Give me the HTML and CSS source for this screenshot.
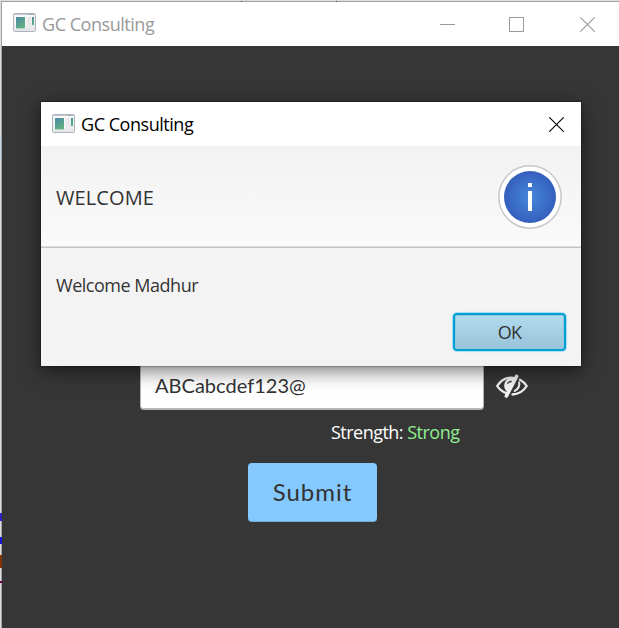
FILE: index.html
```html
<!DOCTYPE html>
<html lang="en">
<head>
<meta charset="utf-8">
<title>GC Consulting</title>
<link rel="stylesheet" href="styles.css">
</head>
<body>
<svg class="defs" width="0" height="0" aria-hidden="true">
  <defs>
    <linearGradient id="pane" x1="0" y1="0" x2=".6" y2="1"><stop offset="0" stop-color="#4b86a8"/><stop offset="1" stop-color="#61b183"/></linearGradient>
    <linearGradient id="frame" x1="0" y1="0" x2="0" y2="1"><stop offset="0" stop-color="#fafafa"/><stop offset="1" stop-color="#e2e4e8"/></linearGradient>
    <radialGradient id="disc"><stop offset="0" stop-color="#4688d9"/><stop offset="1" stop-color="#355fbd"/></radialGradient>
    <symbol id="app-icon" viewBox="0 0 23 19">
      <rect x=".5" y=".5" width="22" height="18" rx="1" fill="url(#frame)" stroke="#b0b5bd"/>
      <path d="M1 1.500h21" stroke="#c3c8d1"/>
      <path d="M15 1.500h6" stroke="#a3afbf"/>
      <rect x="2.500" y="3.500" width="10" height="12.500" fill="#fff"/>
      <rect x="3" y="4" width="9" height="11.500" fill="url(#pane)"/>
      <path d="M14 4h4v7h-4zM14 12.500h4v3h-4zM19 12.500h2v3h-2z" fill="#e9e9e9"/>
      <rect x="19" y="4" width="2" height="8" fill="url(#pane)"/>
    </symbol>
    <symbol id="close" viewBox="0 0 15 15"><path d="M.3.3l14.400 14.400M14.700.3L.3 14.700" fill="none" stroke="currentColor" stroke-width="1.100"/></symbol>
  </defs>
</svg>
<div class="desktop">
  <main class="window">
    <header class="titlebar">
      <svg class="app-icon"><use href="#app-icon"/></svg>
      <span class="title">GC Consulting</span>
      <div class="controls">
        <span class="minimize"></span>
        <span class="maximize"></span>
        <svg class="close"><use href="#close"/></svg>
      </div>
    </header>
    <section class="form">
      <div class="password-row">
        <div class="field">ABCabcdef123@</div>
        <svg class="eye" viewBox="0 0 32 24" fill="none" stroke="#f2f2f2" stroke-linecap="round">
          <path d="M10.500 19.200C6 17.700 3 14.800 1.200 12 4.500 6.800 9.800 3.600 15.500 3.600c1.200 0 2.200.1 3.300.4" stroke-width="2.300"/>
          <path d="M24 5.800c2.800 1.500 5 3.500 6.700 6.200-3.200 5-7.800 8.300-14.200 8.500" stroke-width="2.300"/>
          <path d="M12.500 18.500C7 16 7 9 11 5.500L19.500 3z" fill="#f2f2f2" stroke="none"/>
          <path d="M11.800 9.200c.8-1.200 1.800-1.800 3.500-1.700" stroke="#363636" stroke-width="1.300"/>
          <path d="M23.200 8.200c.7 4-1 6.800-4.500 8.800" stroke-width="2"/>
          <path d="M20.600 2.300L10.400 22" stroke-width="3.600"/>
        </svg>
      </div>
      <div class="strength">Strength: <span class="strong">Strong</span></div>
      <button class="submit"><span>Submit</span></button>
    </section>
  </main>
  <i class="edge selection"></i><i class="edge glyph-a"></i><i class="edge glyph-b"></i><i class="edge glyph-c"></i><i class="edge glyph-d"></i>
  <i class="tick tick-left"></i><i class="tick tick-right"></i>
</div>
<section class="dialog">
  <header class="dialog-title">
    <svg class="app-icon"><use href="#app-icon"/></svg>
    <span class="title">GC Consulting</span>
    <svg class="close"><use href="#close"/></svg>
  </header>
  <div class="dialog-header">
    <span class="heading">WELCOME</span>
    <svg class="info" viewBox="0 0 64 64">
      <circle cx="32" cy="32" r="31.200" fill="#fff" stroke="#c8c8c8" stroke-width="1.500"/>
      <circle cx="32" cy="32" r="26" fill="url(#disc)"/>
      <path d="M30 18h4v4h-4zM30 26h4v20h-4z" fill="#fff"/>
    </svg>
  </div>
  <div class="dialog-content">
    <p class="message">Welcome Madhur</p>
    <button class="ok">OK</button>
  </div>
</section>
</body>
</html>
```
FILE: styles.css
```css
* { box-sizing: border-box; }
body { margin: 0; width: 619px; height: 628px; overflow: hidden; position: relative; font-family: "Open Sans", "Noto Sans", sans-serif; font-size: 18px; color: #333; }
button { font: inherit; color: inherit; padding: 0; }
.defs { position: absolute; }
.desktop { height: 628px; background: #dcdcdc; padding: 1px 0 0 1px; position: relative; }
.window { height: 627px; border: solid #a2a2a2; border-width: 1px 0 0 1px; background: #363636; }
.titlebar { height: 44px; background: #fff; color: #999; display: flex; align-items: center; padding: 0 24px 0 11px; }
.app-icon { width: 23px; height: 19px; flex: none; }
.titlebar .app-icon { margin-top: -3px; }
.title { margin-left: 6px; line-height: 24px; letter-spacing: -.46px; }
.controls { display: flex; align-items: center; margin-left: auto; gap: 54px; }
.minimize { width: 15px; height: 1px; background: #999; }
.maximize { width: 15px; height: 15px; border: 1px solid #999; }
.close { width: 15px; height: 15px; flex: none; }
.controls .close { margin-left: 2px; }
.form { display: flex; flex-direction: column; align-items: flex-start; padding: 316px 0 0 138px; }
.password-row { display: flex; align-items: center; gap: 12px; height: 48px; }
.field { width: 344px; height: 48px; background: #fff; border: 1px solid #b5b5b5; border-bottom-width: 2px; border-radius: 4px; padding-left: 14px; font-family: Lato, sans-serif; font-size: 20px; line-height: 45px; letter-spacing: .02px; }
.eye { width: 32px; height: 24px; }
.strength { margin: 10px 0 0 191px; height: 24px; line-height: 24px; color: #fff; letter-spacing: -.52px; white-space: nowrap; }
.strong { color: #90ee90; }
.submit { margin: 19px 0 0 108px; width: 129px; height: 59px; border: 0; border-radius: 4px; background: #84c9ff; border-bottom: 1px solid #70abd9; font-family: Lato, sans-serif; font-size: 24px; letter-spacing: 1px; line-height: 56px; }
.submit span { display: block; }
.edge { position: absolute; left: 0; width: 2px; }
.selection { top: 136px; height: 23px; width: 1px; background: #c9dbe8; }
.glyph-a { top: 513px; height: 8px; background: #3020c8; }
.glyph-b { top: 537px; height: 7px; background: #1515d8; }
.glyph-c { top: 555px; height: 13px; background: #843400; }
.glyph-d { top: 581px; height: 2px; background: #750045; }
.tick { position: absolute; top: 1px; width: 1px; height: 1px; background: #444; }
.tick-left { left: 241px; }
.tick-right { left: 336px; }
.dialog { position: absolute; left: 41px; top: 102px; width: 540px; height: 264px; background: #f3f3f3; box-shadow: 0 0 1px 1px #0003, 0 5px 18px #0008; }
.dialog-title { height: 44px; display: flex; align-items: center; background: #fff; color: #000; padding: 0 17px 0 11px; }
.dialog-title .app-icon { margin-top: -2px; }
.dialog-title .close { margin-left: auto; }
.dialog-header { height: 102px; display: flex; align-items: center; justify-content: space-between; padding: 0 19px 0 15px; background: linear-gradient(#f2f2f2, #fafafa); border-bottom: 1px solid #c4c4c4; box-shadow: inset 0 -1px #dedede; }
.heading { font-size: 20px; letter-spacing: .1px; padding-top: 1px; }
.info { width: 64px; height: 64px; }
.dialog-content { display: flex; flex-direction: column; padding: 25px 15px 0; }
.message { margin: 0; line-height: 24px; letter-spacing: -.48px; }
.ok { align-self: flex-end; width: 113px; height: 38px; margin-top: 16px; border: 2px solid #039ed3; border-radius: 4px; background: linear-gradient(#b1dbee, #99c3d8); box-shadow: 0 0 1px 1px #a5dff3, inset 0 0 0 1px #8fc9df; letter-spacing: -.7px; }
```
